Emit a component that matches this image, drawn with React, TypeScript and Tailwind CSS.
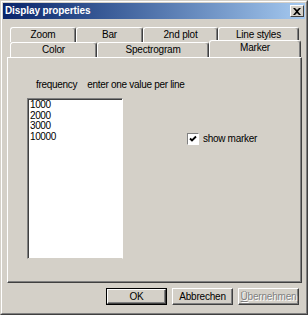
import React from "react";

const font = { fontFamily: '"Liberation Sans", Arial, sans-serif' };

function Tab({ label, w, selected }: { label: string; w: string; selected?: boolean }) {
  return (
    <div
      className={`${w} ${selected ? "h-[17px] -mt-[2px] relative z-10 -mb-[1px] pb-[3px]" : "h-[15px]"} shrink-0 flex items-center justify-center bg-[#d4d0c8] border-t border-l border-white border-r border-r-[#404040] rounded-t-[3px] text-[10px] tracking-[-0.2px] text-black leading-none`}
      style={{ boxShadow: "inset -1px 0 0 #808080" }}
    >
      {label}
    </div>
  );
}

function Button({ label, def, disabled }: { label: string; def?: boolean; disabled?: boolean }) {
  return (
    <div className={`w-[61px] h-[17px] ${def ? "border border-black" : ""}`}>
      <div
        className="w-full h-full flex items-center justify-center bg-[#d4d0c8] border-t border-l border-white border-r border-b border-r-[#404040] border-b-[#404040] text-[10px] tracking-[-0.2px]"
        style={{ boxShadow: "inset -1px -1px 0 #808080" }}
      >
        {disabled ? (
          <span className="text-[#808080]" style={{ textShadow: "1px 1px 0 #fff" }}>
            <span className="underline">Ü</span>bernehmen
          </span>
        ) : (
          <span className="text-black">{label}</span>
        )}
      </div>
    </div>
  );
}

export default function App() {
  return (
    <div className="w-[308px] h-[315px] bg-[#d4d0c8] overflow-hidden" style={font}>
      <div className="w-full h-full border border-t-[#d4d0c8] border-l-[#d4d0c8] border-r-[#404040] border-b-[#404040]">
        <div className="w-full h-full border border-t-white border-l-white border-r-[#808080] border-b-[#808080] p-[1px] flex flex-col">
          {/* title bar */}
          <div className="h-[16px] shrink-0 flex items-center pl-[2px] pr-[1px] bg-gradient-to-r from-[#0a246a] to-[#a6caf0]">
            <span className="text-white font-bold text-[10px] tracking-[-0.1px] leading-none">Display properties</span>
            <div className="ml-auto w-[14px] h-[12px] bg-[#d4d0c8] border-t border-l border-white border-r border-b border-r-[#404040] border-b-[#404040] flex items-center justify-center">
              <svg width="8" height="7" viewBox="0 0 8 7">
                <path d="M0 0h2l2 2 2-2h2L5 3.5 8 7H6L4 5 2 7H0l3-3.5z" fill="#000" />
              </svg>
            </div>
          </div>
          {/* tabs */}
          <div className="mt-[8px] pl-[4px] flex flex-col">
            <div className="flex pl-[3px]">
              <Tab label="Zoom" w="w-[66px]" />
              <Tab label="Bar" w="w-[67px]" />
              <Tab label="2nd plot" w="w-[75px]" />
              <Tab label="Line styles" w="w-[81px]" />
            </div>
            <div className="flex pl-[3px]">
              <Tab label="Color" w="w-[87px]" />
              <Tab label="Spectrogram" w="w-[112px]" />
              <Tab label="Marker" w="w-[92px]" selected />
            </div>
            {/* panel */}
            <div className="w-[295px] h-[226px] border-t border-l border-white border-r border-b border-r-[#404040] border-b-[#404040]" style={{ boxShadow: "inset -1px -1px 0 #808080" }}>
              <div className="flex text-[10px] tracking-[-0.3px] text-black pt-[22px] pl-[28px] gap-[10px] leading-none">
                <span>frequency</span>
                <span>enter one value per line</span>
              </div>
              <div className="flex items-start mt-[8px] pl-[19px]">
                <div className="w-[96px] h-[161px] bg-white border-t border-l border-[#808080] border-r border-b border-r-white border-b-[#d4d0c8]">
                  <div className="w-full h-full border-t border-l border-[#404040] pl-[1px] text-[10px] tracking-[-0.4px] leading-[10.5px] text-black">
                    <div>1000</div>
                    <div>2000</div>
                    <div>3000</div>
                    <div>10000</div>
                  </div>
                </div>
                <div className="ml-[64px] mt-[35px] flex items-center gap-[4px]">
                  <div className="w-[12px] h-[12px] bg-white border-t border-l border-[#808080] border-r border-b border-r-white border-b-white flex items-center justify-center">
                    <svg width="8" height="8" viewBox="0 0 8 8">
                      <path d="M1 3.5l2 2L7 1.5" stroke="#000" strokeWidth="1.8" fill="none" />
                    </svg>
                  </div>
                  <span className="text-[10px] tracking-[-0.3px] leading-[12px] text-black">show marker</span>
                </div>
              </div>
            </div>
          </div>
          {/* buttons */}
          <div className="flex mt-[5px] pl-[103px] gap-[5px]">
            <Button label="OK" def />
            <Button label="Abbrechen" />
            <Button label="Übernehmen" disabled />
          </div>
        </div>
      </div>
    </div>
  );
}
